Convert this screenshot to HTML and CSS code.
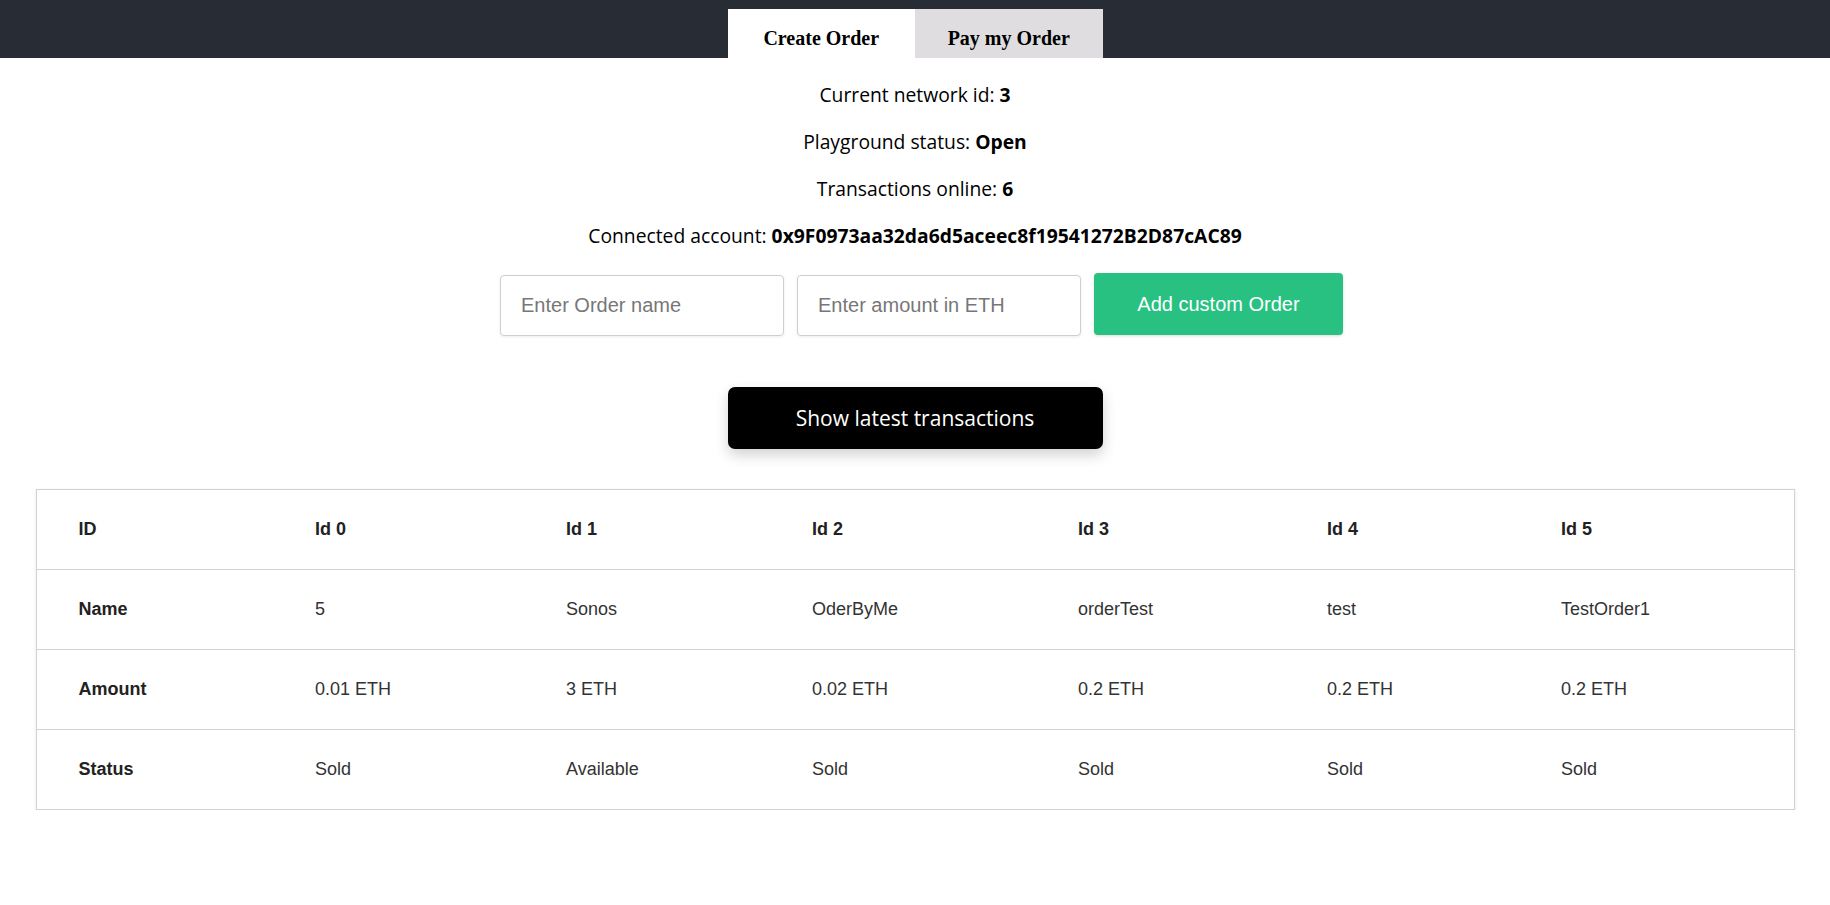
FILE: index.html
```html
<!DOCTYPE html>
<html>
<head>
<meta charset="utf-8">
<title>Orders</title>
<link rel="stylesheet" href="styles.css">
</head>
<body>
<header class="topbar">
  <nav class="tabs">
    <div class="tab tab-active">Create Order</div>
    <div class="tab tab-inactive">Pay my Order</div>
  </nav>
</header>
<main class="main">
  <section class="info">
    <p class="info-line">Current network id: <b>3</b></p>
    <p class="info-line">Playground status: <b>Open</b></p>
    <p class="info-line">Transactions online: <b>6</b></p>
    <p class="info-line">Connected account: <b>0x9F0973aa32da6d5aceec8f19541272B2D87cAC89</b></p>
  </section>
  <form class="order-form">
    <input class="field" type="text" placeholder="Enter Order name">
    <input class="field" type="text" placeholder="Enter amount in ETH">
    <button class="add-btn" type="button">Add custom Order</button>
  </form>
  <div class="show-wrap">
    <button class="show-btn" type="button">Show latest transactions</button>
  </div>
  <table class="tx-table">
    <tbody>
      <tr><th>ID</th><th>Id 0</th><th>Id 1</th><th>Id 2</th><th>Id 3</th><th>Id 4</th><th>Id 5</th></tr>
      <tr><th>Name</th><td>5</td><td>Sonos</td><td>OderByMe</td><td>orderTest</td><td>test</td><td>TestOrder1</td></tr>
      <tr><th>Amount</th><td>0.01 ETH</td><td>3 ETH</td><td>0.02 ETH</td><td>0.2 ETH</td><td>0.2 ETH</td><td>0.2 ETH</td></tr>
      <tr><th>Status</th><td>Sold</td><td>Available</td><td>Sold</td><td>Sold</td><td>Sold</td><td>Sold</td></tr>
    </tbody>
  </table>
</main>
</body>
</html>
```

FILE: styles.css
```css
* { box-sizing: border-box; }
html, body { margin: 0; padding: 0; background: #ffffff; }
body { font-family: "Open Sans", "Noto Sans", sans-serif; color: #000; }

.topbar {
  height: 58px;
  background: #282c34;
  display: flex;
  justify-content: center;
  align-items: flex-end;
}
.tabs { display: flex; }
.tab {
  width: 187.5px;
  height: 49px;
  display: flex;
  align-items: center;
  justify-content: center;
  padding-top: 9px;
  font-family: "Liberation Serif", "Times New Roman", serif;
  font-weight: bold;
  font-size: 20px;
  color: #000;
}
.tab-active { background: #ffffff; }
.tab-inactive { background: #dfdddf; }

.main { display: flex; flex-direction: column; align-items: center; }

.info { padding-top: 13px; display: flex; flex-direction: column; align-items: center; }
.info-line {
  margin: 0;
  height: 47px;
  line-height: 47px;
  font-size: 19.3px;
  color: #000;
}
.info-line b { font-weight: 700; }

.order-form {
  margin-top: 14px;
  margin-left: 13px;
  display: flex;
  align-items: flex-start;
  gap: 13px;
}
.field {
  width: 284px;
  height: 61px;
  margin-top: 2px;
  border: 1px solid #cfcfcf;
  border-radius: 4px;
  padding: 0 20px;
  font-family: "Liberation Sans", Arial, sans-serif;
  font-size: 20px;
  color: #333;
  box-shadow: 0 1px 3px rgba(0,0,0,0.08);
  outline: none;
}
.field::placeholder { color: #777; }
.add-btn {
  width: 249px;
  height: 62px;
  border: none;
  border-radius: 4px;
  background: #28c182;
  color: #ffffff;
  font-family: "Liberation Sans", Arial, sans-serif;
  font-size: 20px;
  box-shadow: 0 1px 3px rgba(0,0,0,0.15);
}

.show-wrap { margin-top: 51px; }
.show-btn {
  width: 375px;
  height: 62px;
  border: none;
  border-radius: 7px;
  background: #000000;
  color: #ffffff;
  font-family: "Open Sans", "Noto Sans", sans-serif;
  font-size: 21px;
  box-shadow: 0 6px 14px rgba(0,0,0,0.18);
}

.tx-table {
  margin-top: 40px;
  width: 1758px;
  table-layout: fixed;
  border-collapse: collapse;
  border: 1px solid #d2d2d2;
  box-shadow: 0 1px 3px rgba(0,0,0,0.10);
  font-family: "Liberation Sans", Arial, sans-serif;
  font-size: 18px;
  color: #333;
}
.tx-table tr { height: 80px; border-top: 1px solid #d2d2d2; }
.tx-table tr:first-child { border-top: none; }
.tx-table th, .tx-table td {
  padding: 0 0 0 42px;
  text-align: left;
  vertical-align: middle;
}
.tx-table th { font-weight: bold; color: #222; }
.tx-table td { font-weight: normal; }
.tx-table tr > :nth-child(1) { width: 237px; }
.tx-table tr > :nth-child(2) { width: 251px; }
.tx-table tr > :nth-child(3) { width: 246px; }
.tx-table tr > :nth-child(4) { width: 266px; }
.tx-table tr > :nth-child(5) { width: 249px; }
.tx-table tr > :nth-child(6) { width: 234px; }
.tx-table tr > :nth-child(7) { width: 275px; }
```
